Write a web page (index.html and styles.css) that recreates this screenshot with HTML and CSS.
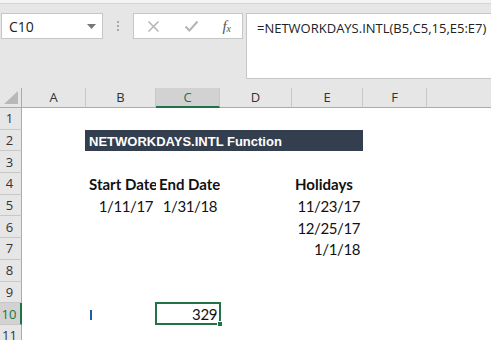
FILE: index.html
```html
<!DOCTYPE html>
<html lang="en">
<head>
    <meta charset="UTF-8" />
    <title>NETWORKDAYS.INTL Function</title>
    <link rel="stylesheet" href="styles.css">
</head>
<body>
    <div class="top-strip"></div>
    <div class="formula-row">
        <div class="name-box">
            <span>C10</span>
            <svg class="caret" width="9" height="5" viewBox="0 0 9 5"><path d="M0 0h9L4.5 5z" fill="#777"/></svg>
        </div>
        <div class="grip"><i></i><i></i><i></i></div>
        <div class="fx-buttons">
            <svg width="13" height="13" viewBox="0 0 13 13"><path d="M1.5 1.5l10 10M11.5 1.5l-10 10" stroke="#b4b4b4" stroke-width="1.5"/></svg>
            <svg width="15" height="13" viewBox="0 0 15 13"><path d="M1.5 6.5l4 4 8-9" stroke="#b4b4b4" stroke-width="2" fill="none"/></svg>
            <span class="fx">f<sub>x</sub></span>
        </div>
        <div class="formula-box">=NETWORKDAYS.INTL(B5,C5,15,E5:E7)</div>
    </div>

    <div class="sheet">
        <div class="corner"><svg width="14" height="13" viewBox="0 0 14 13"><path d="M14 0v13H0z" fill="#b8b8b8"/></svg></div>
        <div class="col-head">A</div>
        <div class="col-head">B</div>
        <div class="col-head active">C</div>
        <div class="col-head">D</div>
        <div class="col-head">E</div>
        <div class="col-head">F</div>
        <div class="col-head last"></div>

        <!-- row 1 -->
        <div class="row-head">1</div>
        <div class="row-fill"></div>

        <!-- row 2 -->
        <div class="row-head">2</div>
        <div class="cell"></div>
        <div class="title">NETWORKDAYS.INTL Function</div>
        <div class="cell wide"></div>

        <!-- row 3 -->
        <div class="row-head">3</div>
        <div class="row-fill"></div>

        <!-- row 4 -->
        <div class="row-head">4</div>
        <div class="cell"></div>
        <div class="cell bold">Start Date</div>
        <div class="cell bold">End Date</div>
        <div class="cell"></div>
        <div class="cell bold">Holidays</div>
        <div class="cell wide"></div>

        <!-- row 5 -->
        <div class="row-head">5</div>
        <div class="cell"></div>
        <div class="cell num">1/11/17</div>
        <div class="cell num">1/31/18</div>
        <div class="cell"></div>
        <div class="cell num">11/23/17</div>
        <div class="cell wide"></div>

        <!-- row 6 -->
        <div class="row-head">6</div>
        <div class="cell span4"></div>
        <div class="cell num">12/25/17</div>
        <div class="cell wide"></div>

        <!-- row 7 -->
        <div class="row-head">7</div>
        <div class="cell span4"></div>
        <div class="cell num">1/1/18</div>
        <div class="cell wide"></div>

        <!-- rows 8, 9 -->
        <div class="row-head">8</div>
        <div class="row-fill"></div>
        <div class="row-head">9</div>
        <div class="row-fill"></div>

        <!-- row 10 -->
        <div class="row-head active">10</div>
        <div class="cell"></div>
        <div class="cell"><span class="ibeam"></span></div>
        <div class="cell num selected">329<span class="handle"></span></div>
        <div class="cell wide3"></div>

        <!-- row 11 -->
        <div class="row-head">11</div>
        <div class="row-fill"></div>
    </div>
</body>
</html>
```

FILE: styles.css
```css
* {
    box-sizing: border-box;
}
body {
    margin: 0;
    width: 491px;
    height: 340px;
    overflow: hidden;
    background: #e6e6e6;
    font-family: 'Open Sans', 'Noto Sans', sans-serif;
    color: #222;
}
.top-strip {
    height: 4px;
    background: #f3f3f3;
    border-bottom: 1px solid #d4d4d4;
}
.formula-row {
    display: flex;
    align-items: flex-start;
    padding: 9px 0 0 1px;
    height: 84px;
}
.name-box {
    flex-shrink: 0;
    width: 102px;
    height: 26px;
    background: #fff;
    border: 1px solid #c6c6c6;
    display: flex;
    align-items: center;
    justify-content: space-between;
    padding: 0 6px 0 7px;
    font-size: 14px;
    color: #222;
}
.caret {
    margin-top: 1px;
}
.grip {
    flex-shrink: 0;
    width: 30px;
    height: 26px;
    display: flex;
    flex-direction: column;
    align-items: center;
    justify-content: center;
    gap: 2px;
}
.grip i {
    width: 2px;
    height: 2px;
    background: #a8a8a8;
}
.fx-buttons {
    flex-shrink: 0;
    width: 110px;
    height: 26px;
    background: #fff;
    border: 1px solid #c6c6c6;
    display: flex;
    align-items: center;
    justify-content: space-between;
    padding: 0 11px 0 13px;
}
.fx {
    font-family: 'Liberation Serif', serif;
    font-style: italic;
    font-size: 15px;
    color: #555;
    line-height: 1;
}
.fx sub {
    font-size: 10px;
    vertical-align: -1px;
}
.formula-box {
    flex: 1;
    min-width: 0;
    margin-left: 3px;
    height: 66px;
    background: #fff;
    border: 1px solid #c6c6c6;
    border-right: none;
    padding: 5px 0 0 10px;
    font-size: 13px;
    color: #222;
    white-space: nowrap;
    overflow: hidden;
}
.sheet {
    display: grid;
    grid-template-columns: 22px 64px 70px 64px 72px 71px 64px 1fr;
    grid-template-rows: 20px repeat(11, 21.7px);
    background: #fff;
    font-family: 'Lato', 'Liberation Sans', sans-serif;
    font-size: 15px;
    color: #111;
}
.corner,
.col-head {
    background: #e6e6e6;
    border-bottom: 1px solid #ababab;
    border-right: 1px solid #c8c8c8;
}
.corner {
    display: flex;
    align-items: flex-end;
    justify-content: flex-end;
    padding: 0 3px 3px 0;
    border-right-color: #ababab;
}
.col-head {
    font-family: 'Open Sans', 'Noto Sans', sans-serif;
    font-size: 13px;
    color: #333;
    text-align: center;
    line-height: 19px;
}
.col-head.active {
    background: #d2d2d2;
    border-bottom: 2px solid #217346;
    color: #217346;
}
.col-head.last {
    border-right: none;
}
.row-head {
    grid-column: 1;
    background: #e6e6e6;
    border-right: 1px solid #ababab;
    border-bottom: 1px solid #c8c8c8;
    font-family: 'Open Sans', 'Noto Sans', sans-serif;
    font-size: 13px;
    color: #333;
    display: flex;
    align-items: center;
    justify-content: center;
    padding-right: 2px;
}
.row-head.active {
    background: #d2d2d2;
    border-right: 2px solid #217346;
    color: #217346;
}
.row-fill {
    grid-column: 2 / -1;
}
.cell {
    white-space: nowrap;
    overflow: visible;
    display: flex;
    align-items: center;
    padding: 1px 3px 0 3px;
    min-width: 0;
}
.cell.wide {
    grid-column: 7 / -1;
}
.cell.wide3 {
    grid-column: 5 / -1;
}
.cell.span4 {
    grid-column: 2 / 6;
}
.bold {
    font-weight: 700;
    overflow: hidden;
}
.num {
    justify-content: flex-end;
    letter-spacing: -0.4px;
}
.title {
    grid-column: 3 / 7;
    background: #333f4f;
    color: #fff;
    font-family: 'Liberation Sans', Arial, sans-serif;
    font-weight: 700;
    font-size: 13px;
    display: flex;
    align-items: center;
    padding: 1px 4px 0;
    margin-left: -1px;
}
.selected {
    position: relative;
    border: 2px solid #217346;
    margin: -1px -1px 0 -1px;
    padding-right: 2px;
}
.handle {
    position: absolute;
    right: -4px;
    bottom: -4px;
    width: 6px;
    height: 6px;
    background: #217346;
    border: 1px solid #fff;
}
.ibeam {
    width: 1.5px;
    height: 10px;
    background: #1f5fa0;
    margin-left: 1px;
}
```
